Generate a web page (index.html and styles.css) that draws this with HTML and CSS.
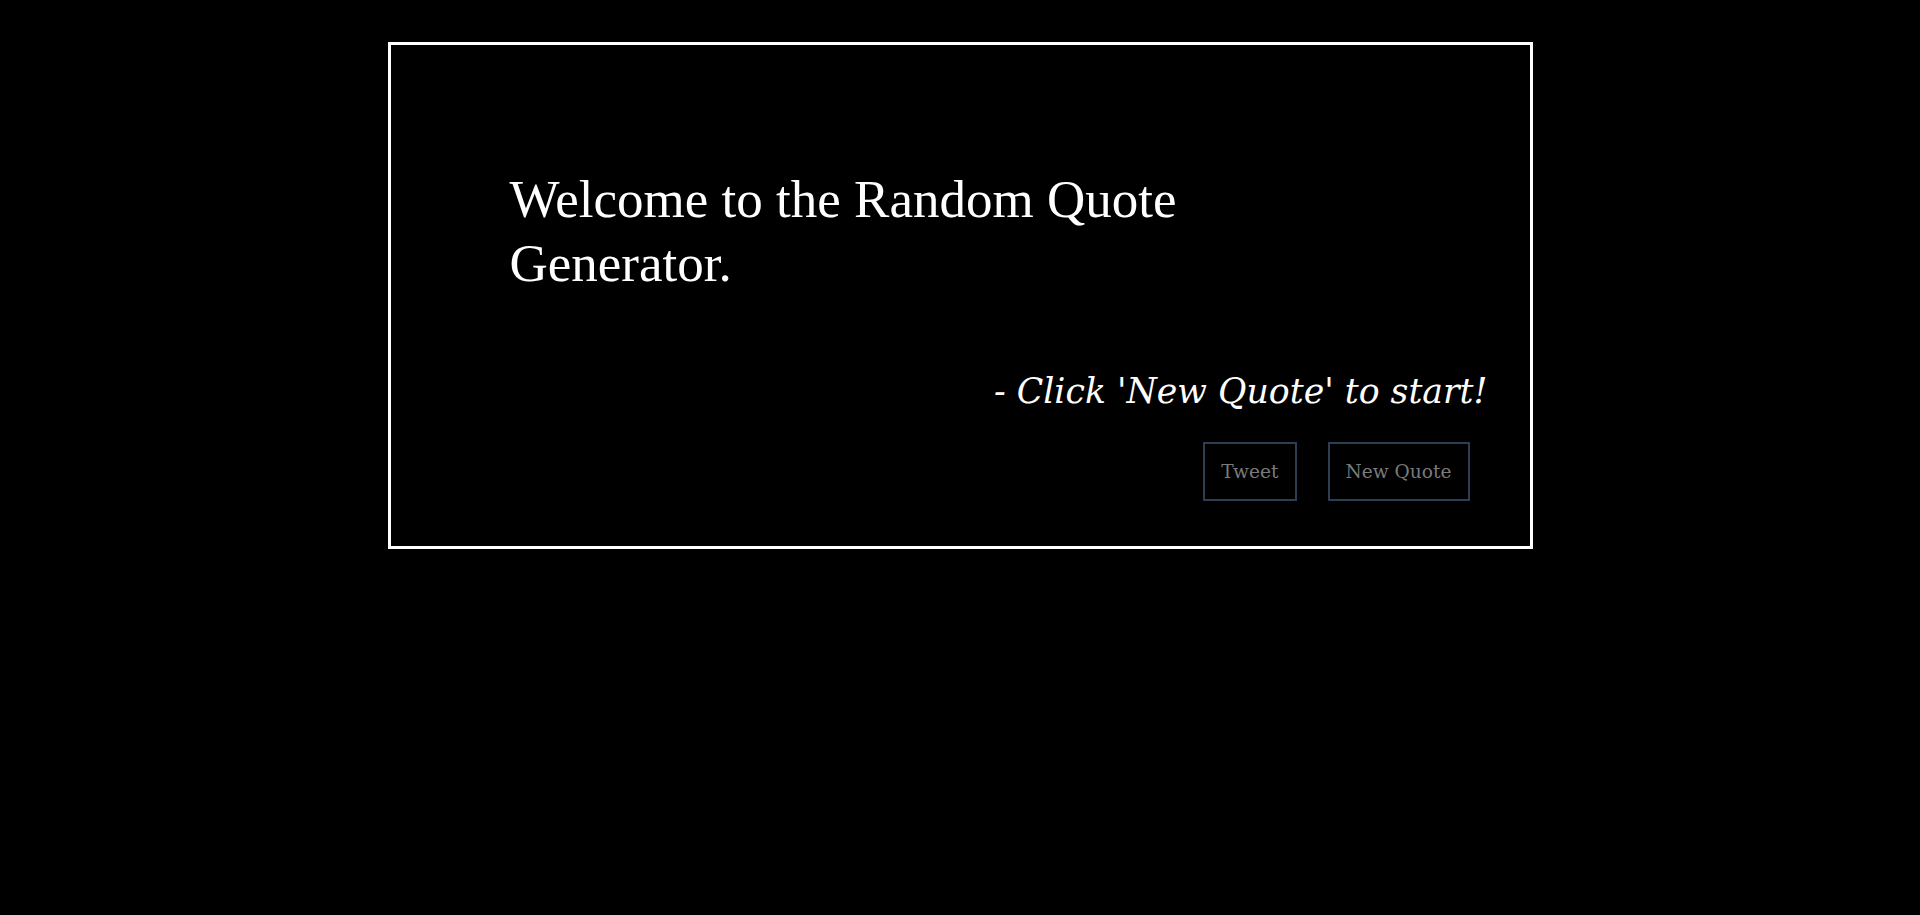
FILE: index.html
```html
<!DOCTYPE html>
<html lang="en">
<head>
<meta charset="utf-8">
<title>Random Quote Generator</title>
<link rel="stylesheet" href="styles.css">
</head>
<body>
<main class="card" id="quote-box">
  <h1 class="quote-text" id="text">Welcome to the Random Quote Generator.</h1>
  <p class="quote-author" id="author">- Click 'New Quote' to start!</p>
  <div class="actions">
    <a class="btn" id="tweet-quote" href="#">Tweet</a>
    <button class="btn" id="new-quote" type="button">New Quote</button>
  </div>
</main>
</body>
</html>
```
FILE: styles.css
```css
html, body {
  margin: 0;
  padding: 0;
  background: #000;
  height: 100%;
}

.card {
  box-sizing: border-box;
  width: 1145px;
  margin: 42px auto 0;
  border: 3px solid #fff;
  padding: 122px 0 45px 0;
  color: #fff;
}

.quote-text {
  margin: 0 0 0 119px;
  max-width: 760px;
  font-family: "Liberation Serif", "Times New Roman", serif;
  font-weight: normal;
  font-size: 53px;
  line-height: 64px;
}

.quote-author {
  margin: 74px 42px 0 0;
  text-align: right;
  font-family: "DejaVu Serif", serif;
  font-style: italic;
  font-size: 34.7px;
  line-height: 44px;
}

.actions {
  display: flex;
  justify-content: flex-end;
  gap: 31px;
  margin: 29px 60px 0 0;
}

.btn {
  box-sizing: border-box;
  display: inline-block;
  background: #000;
  border: 2px solid #2c3e50;
  color: #7a7a7a;
  font-family: "DejaVu Serif", serif;
  font-size: 18.6px;
  line-height: 23px;
  padding: 16px 16px;
  text-decoration: none;
  cursor: pointer;
}
```
